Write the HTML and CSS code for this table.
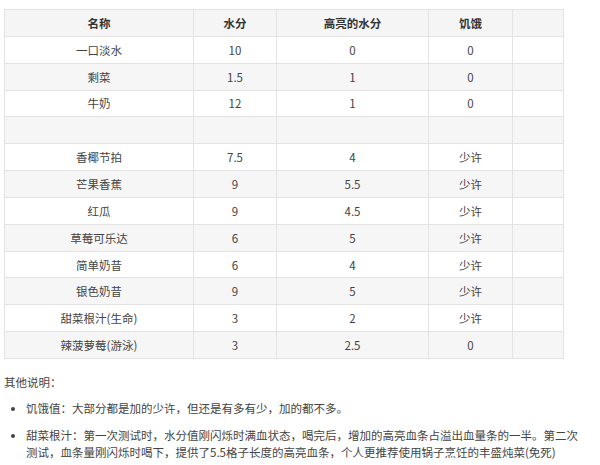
FILE: index.html
```html
<!DOCTYPE html>
<html lang="zh">
<head>
<meta charset="utf-8">
<link rel="stylesheet" href="styles.css">
</head>
<body>
<div class="page">
  <table class="data">
    <colgroup>
      <col class="c1"><col class="c2"><col class="c3"><col class="c4"><col class="c5">
    </colgroup>
    <thead>
      <tr><th>名称</th><th>水分</th><th>高亮的水分</th><th>饥饿</th><th></th></tr>
    </thead>
    <tbody>
      <tr><td>一口淡水</td><td>10</td><td>0</td><td>0</td><td></td></tr>
      <tr><td>剩菜</td><td>1.5</td><td>1</td><td>0</td><td></td></tr>
      <tr><td>牛奶</td><td>12</td><td>1</td><td>0</td><td></td></tr>
      <tr><td></td><td></td><td></td><td></td><td></td></tr>
      <tr><td>香椰节拍</td><td>7.5</td><td>4</td><td>少许</td><td></td></tr>
      <tr><td>芒果香蕉</td><td>9</td><td>5.5</td><td>少许</td><td></td></tr>
      <tr><td>红瓜</td><td>9</td><td>4.5</td><td>少许</td><td></td></tr>
      <tr><td>草莓可乐达</td><td>6</td><td>5</td><td>少许</td><td></td></tr>
      <tr><td>简单奶昔</td><td>6</td><td>4</td><td>少许</td><td></td></tr>
      <tr><td>银色奶昔</td><td>9</td><td>5</td><td>少许</td><td></td></tr>
      <tr><td>甜菜根汁(生命)</td><td>3</td><td>2</td><td>少许</td><td></td></tr>
      <tr><td>辣菠萝莓(游泳)</td><td>3</td><td>2.5</td><td>0</td><td></td></tr>
    </tbody>
  </table>
  <p class="note">其他说明：</p>
  <ul class="list">
    <li>饥饿值：大部分都是加的少许，但还是有多有少，加的都不多。</li>
    <li>甜菜根汁：第一次测试时，水分值刚闪烁时满血状态，喝完后，增加的高亮血条占溢出血量条的一半。第二次测试，血条量刚闪烁时喝下，提供了5.5格子长度的高亮血条，个人更推荐使用锅子烹饪的丰盛炖菜(免死)</li>
  </ul>
</div>
</body>
</html>
```
FILE: styles.css
```css
html, body {
  margin: 0;
  padding: 0;
  background: #fff;
}
.page {
  width: 574px;
  padding: 9px 4px 0 4px;
  font-family: "Noto Sans CJK SC", "Microsoft YaHei", sans-serif;
  font-size: 11.5px;
  color: #444;
}
.data {
  border-collapse: collapse;
  width: 559px;
  table-layout: fixed;
}
.c1 { width: 189px; }
.c2 { width: 83px; }
.c3 { width: 152px; }
.c4 { width: 84px; }
.c5 { width: 51px; }
.data th, .data td {
  border: 1px solid #e3e3e3;
  height: 26.85px;
  padding: 0 6px;
  text-align: center;
  line-height: 16px;
  box-sizing: border-box;
}
.data th {
  background: #f5f5f5;
  font-weight: bold;
  color: #333;
}
.data tbody tr:nth-child(even) td {
  background: #f6f6f6;
}
.note {
  margin: 15px 0 0 0;
  line-height: 17px;
}
.list {
  margin: 9px 0 0 0;
  padding-left: 22px;
  line-height: 17px;
}
.list li {
  margin-bottom: 10px;
}
```
